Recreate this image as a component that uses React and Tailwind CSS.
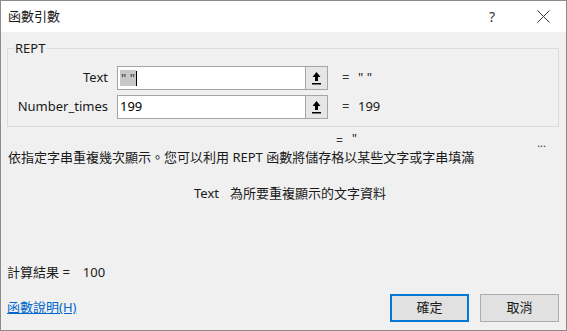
const font = { fontFamily: '"Noto Sans", "Noto Sans CJK TC", sans-serif' };

const UploadIcon = () => (
  <svg width="11" height="14" viewBox="0 0 11 14">
    <path d="M5.5 1 L1.5 6 H4 V10 H7 V6 H9.5 Z" fill="#000" />
    <rect x="1" y="12" width="9" height="1.5" fill="#000" />
  </svg>
);

const ArgRow = ({ label, value, result, selected }) => (
  <div className="flex items-center h-[24px]">
    <div className="w-[100px] text-right text-[13px] text-[#1a1a1a]">{label}</div>
    <div className="ml-[9px] w-[188px] h-[24px] bg-white border border-[#a5a5a5] border-r-0 flex items-center pl-[2px] text-[13px]">
      {selected ? (
        <span className="flex items-center">
          <span className="bg-[#c8c8c8] text-[#333] leading-[16px] px-[1px]">" "</span>
          <span className="w-px h-[15px] bg-black" />
        </span>
      ) : (
        <span className="text-black">{value}</span>
      )}
    </div>
    <div className="w-[23px] h-[24px] bg-[#e6e6e6] border border-[#a5a5a5] flex items-center justify-center">
      <UploadIcon />
    </div>
    <div className="ml-[14px] w-[16px] text-[13px] text-[#333]">=</div>
    <div className="text-[13px] text-[#1a1a1a]">{result}</div>
  </div>
);

export default function App() {
  return (
    <div style={font} className="w-[567px] h-[331px] border border-[#8c8c8c] flex flex-col overflow-hidden">
      <div className="h-[31px] bg-white flex items-center pl-[7px] shrink-0">
        <span className="text-[13px] text-[#1a1a1a]">函數引數</span>
        <div className="ml-auto mr-[16px] flex items-center gap-[42px]">
          <span className="text-[14px] text-[#333]">?</span>
          <svg width="13" height="13" viewBox="0 0 13 13">
            <path d="M0.5 0.5 L12.5 12.5 M12.5 0.5 L0.5 12.5" stroke="#333" strokeWidth="1" />
          </svg>
        </div>
      </div>
      <div className="flex-1 bg-[#f0f0f0] px-[6px] flex flex-col">
        <fieldset className="mt-[8px] border border-[#dcdcdc] px-0 pb-[7px] mr-[1px]">
          <legend className="ml-[6px] px-[1px] text-[13px] text-[#1a1a1a] leading-[17px]">REPT</legend>
          <div className="mt-[9px] flex flex-col gap-[5px]">
            <ArgRow label="Text" selected result={'" "'} />
            <ArgRow label="Number_times" value="199" result="199" />
          </div>
        </fieldset>
        <div className="flex items-center h-[14px] mt-[7px]">
          <div className="ml-[329px] w-[16px] text-[12px] leading-[14px] text-[#333]">=</div>
          <div className="text-[12px] text-[#1a1a1a] leading-[10px] self-start">"</div>
          <div className="ml-auto mr-[14px] text-[11px] leading-[10px] text-[#333] mt-[4px]">...</div>
        </div>
        <div className="text-[13px] text-[#1a1a1a] leading-[18px] pl-[1px]">
          依指定字串重複幾次顯示。您可以利用 REPT 函數將儲存格以某些文字或字串填滿
        </div>
        <div className="mt-[18px] flex text-[13px] text-[#1a1a1a] leading-[18px] pl-[187px]">
          <span className="w-[36px]">Text</span>
          <span>為所要重複顯示的文字資料</span>
        </div>
        <div className="mt-[61px] flex text-[13px] text-[#1a1a1a] leading-[18px]">
          <span>計算結果 =</span>
          <span className="ml-[13px]">100</span>
        </div>
        <div className="mt-[13px] flex items-center">
          <a className="text-[13px] text-[#0066cc] underline">函數說明(H)</a>
          <button className="ml-auto w-[79px] h-[28px] bg-[#e1e1e1] border-2 border-[#0078d7] text-[13px] text-[#1a1a1a]">確定</button>
          <button className="ml-[11px] mr-[1px] w-[79px] h-[28px] bg-[#e1e1e1] border border-[#adadad] text-[13px] text-[#1a1a1a]">取消</button>
        </div>
      </div>
    </div>
  );
}
